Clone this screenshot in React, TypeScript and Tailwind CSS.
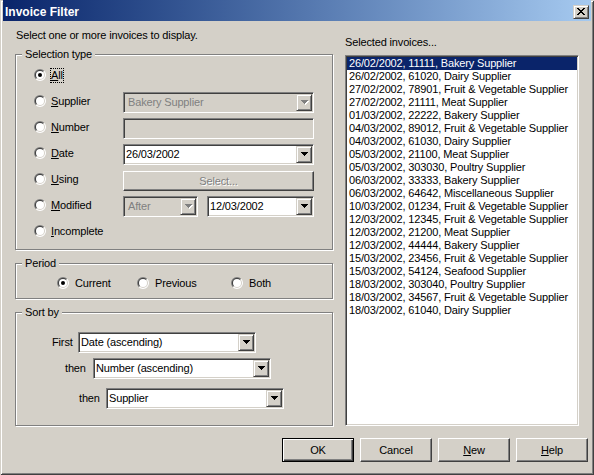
import React from "react";

const invoices = [
  "26/02/2002, 11111, Bakery Supplier",
  "26/02/2002, 61020, Dairy Supplier",
  "27/02/2002, 78901, Fruit & Vegetable Supplier",
  "27/02/2002, 21111, Meat Supplier",
  "01/03/2002, 22222, Bakery Supplier",
  "04/03/2002, 89012, Fruit & Vegetable Supplier",
  "04/03/2002, 61030, Dairy Supplier",
  "05/03/2002, 21100, Meat Supplier",
  "05/03/2002, 303030, Poultry Supplier",
  "06/03/2002, 33333, Bakery Supplier",
  "06/03/2002, 64642, Miscellaneous Supplier",
  "10/03/2002, 01234, Fruit & Vegetable Supplier",
  "12/03/2002, 12345, Fruit & Vegetable Supplier",
  "12/03/2002, 21200, Meat Supplier",
  "12/03/2002, 44444, Bakery Supplier",
  "15/03/2002, 23456, Fruit & Vegetable Supplier",
  "15/03/2002, 54124, Seafood Supplier",
  "18/03/2002, 303040, Poultry Supplier",
  "18/03/2002, 34567, Fruit & Vegetable Supplier",
  "18/03/2002, 61040, Dairy Supplier",
];

function Radio({ checked = false }: { checked?: boolean }) {
  return (
    <svg width="12" height="12" viewBox="0 0 12 12" className="shrink-0">
      <path d="M6 6L1.757 10.243A6 6 0 0 1 10.243 1.757Z" fill="#808080" />
      <path d="M6 6L10.243 1.757A6 6 0 0 1 1.757 10.243Z" fill="#fff" />
      <path d="M6 6L2.464 9.536A5 5 0 0 1 9.536 2.464Z" fill="#404040" />
      <path d="M6 6L9.536 2.464A5 5 0 0 1 2.464 9.536Z" fill="#d4d0c8" />
      <circle cx="6" cy="6" r="4" fill="#fff" />
      {checked && <circle cx="6" cy="6" r="2" fill="#000" />}
    </svg>
  );
}

const tri = "M0 0h7v1h-1v1h-1v1h-1v1h-1v-1h-1v-1h-1v-1h-1z";

function Arrow({ disabled = false }: { disabled?: boolean }) {
  return (
    <svg width="8" height="5" viewBox="0 0 8 5" className="ml-[1px]">
      {disabled && <path d={tri} transform="translate(1 1)" fill="#fff" />}
      <path d={tri} fill={disabled ? "#808080" : "#000"} />
    </svg>
  );
}

function Combo({
  value,
  className = "",
  disabled = false,
}: {
  value: string;
  className?: string;
  disabled?: boolean;
}) {
  return (
    <div
      className={`flex h-[21px] shrink-0 border border-t-[#808080] border-l-[#808080] border-r-white border-b-white p-[1px] shadow-[inset_1px_1px_0_#404040,inset_-1px_-1px_0_#d4d0c8] ${
        disabled ? "bg-[#d4d0c8] text-[#808080]" : "bg-white text-black"
      } ${className}`}
    >
      <span className={`flex-1 truncate leading-[17px] ${disabled ? "pl-[3px]" : "pl-[1px]"}`}>{value}</span>
      <div className="flex w-[16px] items-center justify-center border border-t-[#d4d0c8] border-l-[#d4d0c8] border-r-[#404040] border-b-[#404040] bg-[#d4d0c8] shadow-[inset_1px_1px_0_#fff,inset_-1px_-1px_0_#808080]">
        <Arrow disabled={disabled} />
      </div>
    </div>
  );
}

function GroupBox({
  label,
  className = "",
  children,
}: {
  label: string;
  className?: string;
  children: React.ReactNode;
}) {
  return (
    <div className={`relative border border-[#808080] shadow-[1px_1px_0_#fff,inset_1px_1px_0_#fff] ${className}`}>
      <span className="absolute -top-[7px] left-[6px] bg-[#d4d0c8] px-[3px] leading-[13px]">{label}</span>
      {children}
    </div>
  );
}

function Button({ children, isDefault = false }: { children: React.ReactNode; isDefault?: boolean }) {
  return (
    <div
      className={`flex h-[24px] w-[72px] items-center justify-center bg-[#d4d0c8] ${
        isDefault
          ? "border border-black shadow-[inset_1px_1px_0_#fff,inset_-1px_-1px_0_#404040,inset_-2px_-2px_0_#808080]"
          : "border border-t-white border-l-white border-r-[#404040] border-b-[#404040] shadow-[inset_-1px_-1px_0_#808080]"
      }`}
    >
      {children}
    </div>
  );
}

function SelRow({
  label,
  accel,
  checked = false,
  focus = false,
  children,
}: {
  label: string;
  accel: string;
  checked?: boolean;
  focus?: boolean;
  children?: React.ReactNode;
}) {
  return (
    <div className="flex h-[26px] items-center">
      <div className="flex w-[89px] items-center">
        <Radio checked={checked} />
        <span
          className={`leading-[13px] ${
            focus ? "ml-[4px] border border-dotted border-black px-[0px]" : "ml-[5px]"
          }`}
        >
          <span className="underline">{accel}</span>
          {label}
        </span>
      </div>
      <div className="flex pt-[2px]">{children}</div>
    </div>
  );
}

export default function App() {
  return (
    <div className="flex h-[475px] w-[594px] flex-col bg-[#d4d0c8] px-[3px] pb-[3px] font-['Liberation_Sans',Arial,sans-serif] text-[11px] tracking-[-0.15px] text-black shadow-[inset_1px_1px_0_#d4d0c8,inset_-1px_-1px_0_#404040,inset_2px_2px_0_#fff,inset_-2px_-2px_0_#808080]">
      {/* title bar */}
      <div className="flex h-[21px] items-center bg-gradient-to-r from-[#0a246a] to-[#a6caf0] pt-[2px] pl-[2px] pr-[2px]">
        <span className="flex-1 text-[12px] font-bold leading-[14px] tracking-normal text-white">Invoice Filter</span>
        <div className="flex h-[14px] w-[16px] items-center justify-center border border-t-[#d4d0c8] border-l-[#d4d0c8] border-r-[#404040] border-b-[#404040] bg-[#d4d0c8] shadow-[inset_1px_1px_0_#fff,inset_-1px_-1px_0_#808080]">
          <svg width="8" height="7" viewBox="0 0 8 7">
            <rect x="0" y="0" width="2" height="1" />
            <rect x="6" y="0" width="2" height="1" />
            <rect x="1" y="1" width="2" height="1" />
            <rect x="5" y="1" width="2" height="1" />
            <rect x="2" y="2" width="4" height="1" />
            <rect x="3" y="3" width="2" height="1" />
            <rect x="2" y="4" width="4" height="1" />
            <rect x="1" y="5" width="2" height="1" />
            <rect x="5" y="5" width="2" height="1" />
            <rect x="0" y="6" width="2" height="1" />
            <rect x="6" y="6" width="2" height="1" />
          </svg>
        </div>
      </div>

      {/* body */}
      <div className="flex px-[12px]">
        <div className="flex w-[318px] flex-col">
          <p className="mt-[8px] pl-[1px] leading-[13px]">Select one or more invoices to display.</p>

          <GroupBox label="Selection type" className="mt-[12px] h-[196px] pt-[7px] pl-[18px]">
            <SelRow label="ll" accel="A" checked focus />
            <SelRow label="upplier" accel="S">
              <Combo value="Bakery Supplier" disabled className="w-[191px]" />
            </SelRow>
            <SelRow label="umber" accel="N">
              <div className="h-[21px] w-[191px] border border-t-[#808080] border-l-[#808080] border-r-white border-b-white bg-[#d4d0c8] shadow-[inset_1px_1px_0_#404040,inset_-1px_-1px_0_#d4d0c8]" />
            </SelRow>
            <SelRow label="ate" accel="D">
              <Combo value="26/03/2002" className="w-[191px]" />
            </SelRow>
            <SelRow label="sing" accel="U">
              <div className="mt-[2px] flex h-[20px] w-[191px] items-center justify-center border border-t-white border-l-white border-r-[#404040] border-b-[#404040] text-[#808080] shadow-[inset_-1px_-1px_0_#808080] [text-shadow:1px_1px_0_#fff]">
                Select...
              </div>
            </SelRow>
            <SelRow label="odified" accel="M">
              <Combo value="After" disabled className="w-[75px]" />
              <Combo value="12/03/2002" className="ml-[9px] w-[107px]" />
            </SelRow>
            <SelRow label="ncomplete" accel="I" />
          </GroupBox>

          <GroupBox label="Period" className="mt-[13px] flex h-[36px] items-center pt-[4px] pl-[41px]">
            <div className="flex w-[80px] items-center">
              <Radio checked />
              <span className="ml-[6px] leading-[13px]">Current</span>
            </div>
            <div className="flex w-[94px] items-center">
              <Radio />
              <span className="ml-[6px] leading-[13px]">Previous</span>
            </div>
            <div className="flex items-center">
              <Radio />
              <span className="ml-[6px] leading-[13px]">Both</span>
            </div>
          </GroupBox>

          <GroupBox label="Sort by" className="mt-[13px] flex h-[114px] flex-col pt-[19px]">
            <div className="ml-[36px] flex items-center">
              <span className="w-[26px] leading-[13px]">First</span>
              <Combo value="Date (ascending)" className="w-[178px]" />
            </div>
            <div className="mt-[5px] ml-[49px] flex items-center">
              <span className="w-[28px] leading-[13px]">then</span>
              <Combo value="Number (ascending)" className="w-[178px]" />
            </div>
            <div className="mt-[9px] ml-[63px] flex items-center">
              <span className="w-[27px] leading-[13px]">then</span>
              <Combo value="Supplier" className="w-[178px]" />
            </div>
          </GroupBox>
        </div>

        <div className="ml-[12px] flex w-[234px] flex-col">
          <p className="mt-[15px] leading-[13px]">Selected invoices...</p>
          <div className="mt-[6px] h-[371px] overflow-hidden border border-t-[#808080] border-l-[#808080] border-r-white border-b-white bg-white p-[1px] shadow-[inset_1px_1px_0_#404040,inset_-1px_-1px_0_#d4d0c8]">
            {invoices.map((inv, i) => (
              <div
                key={i}
                className={`h-[13px] whitespace-nowrap pl-[2px] leading-[13px] ${
                  i === 0 ? "bg-[#0a246a] text-white" : "text-black"
                }`}
              >
                {inv}
              </div>
            ))}
          </div>
        </div>
      </div>

      {/* buttons */}
      <div className="mt-[12px] flex justify-end gap-[6px] pr-[3px]">
        <Button isDefault>OK</Button>
        <Button>Cancel</Button>
        <Button>
          <span>
            <span className="underline">N</span>ew
          </span>
        </Button>
        <Button>
          <span>
            <span className="underline">H</span>elp
          </span>
        </Button>
      </div>
    </div>
  );
}
